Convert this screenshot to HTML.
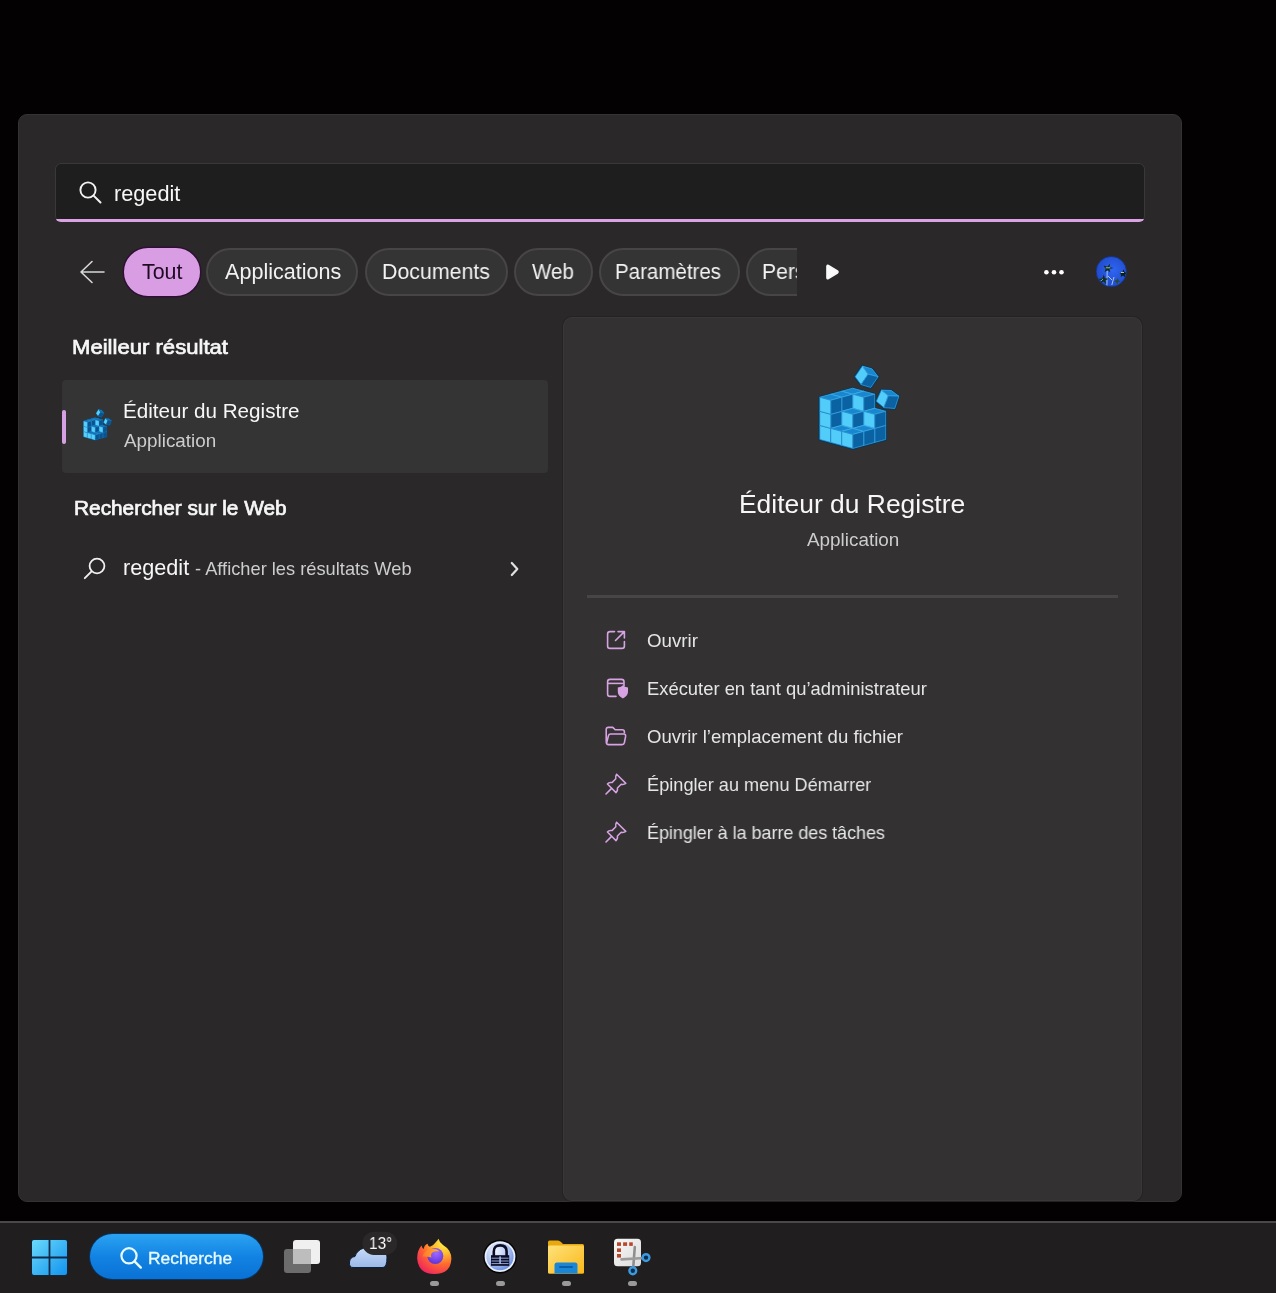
<!DOCTYPE html>
<html><head><meta charset="utf-8">
<style>
*{box-sizing:border-box;margin:0;padding:0}
html,body{width:1276px;height:1293px;overflow:hidden;background:#030102;font-family:"Liberation Sans",sans-serif;color:#fff}
.abs{position:absolute}
#panel{position:absolute;left:18px;top:114px;width:1164px;height:1088px;background:#2a2829;border:1px solid #343233;border-radius:9px}
#search{position:absolute;left:55px;top:163px;width:1090px;height:59px;background:#1f1e1e;box-shadow:inset 0 0 0 1px #3a3939;border-radius:6px;overflow:hidden}
#search .accent{position:absolute;left:0;right:0;bottom:0;height:3.2px;background:#dba3e6}
.txt{position:absolute;white-space:nowrap;line-height:1;will-change:transform}
.chip{position:absolute;top:248px;height:48px;border-radius:24px;background:#353434;border:2px solid #474545}
.chip.on{background:#d99de3;border-color:#d99de3;box-shadow:0 0 0 1.5px #2e1034}
#card{position:absolute;left:62px;top:380px;width:486px;height:93px;background:#353434;border-radius:4px}
#ind{position:absolute;left:62px;top:410px;width:4px;height:34px;background:#d6a1e2;border-radius:2px}
#rp{position:absolute;left:563px;top:317px;width:579px;height:884px;background:#333132;border:1px solid #393738;box-shadow:0 0 0 1px #242223;border-radius:9px}
#sep{position:absolute;left:587px;top:595px;width:531px;height:2.5px;background:#474546}
#taskbar{position:absolute;left:0;top:1221px;width:1276px;height:72px;background:#201e1f;border-top:2px solid #4a4848}
</style></head><body>

<div id="panel"></div>
<div id="search"><div class="accent"></div></div>
<svg class="abs" style="left:78px;top:180px" width="25" height="25" viewBox="0 0 25 25"><circle cx="10" cy="10" r="7.6" fill="none" stroke="#f2f2f2" stroke-width="1.9"/><line x1="15.6" y1="15.6" x2="22.5" y2="22.5" stroke="#f2f2f2" stroke-width="2" stroke-linecap="round"/></svg>

<svg class="abs" style="left:78px;top:259px" width="28" height="26" viewBox="0 0 28 26"><path d="M14 2.5 L3 13 L14 23.5 M3 13 H26" fill="none" stroke="#d8d8d8" stroke-width="1.6" stroke-linecap="round" stroke-linejoin="round"/></svg>

<div class="chip on" style="left:124px;width:76px"></div>
<div class="chip" style="left:206px;width:152px"></div>
<div class="chip" style="left:365px;width:143px"></div>
<div class="chip" style="left:514px;width:79px"></div>
<div class="chip" style="left:599px;width:141px"></div>
<div class="abs" style="left:746px;top:248px;width:51px;height:48px;overflow:hidden">
  <div class="chip" style="left:0;top:0;width:120px"></div>
</div>
<svg class="abs" style="left:824px;top:262px" width="17" height="20" viewBox="0 0 17 20"><path d="M4.3 3.4 Q2.9 2.6 2.9 4.3 V15.7 Q2.9 17.4 4.3 16.6 L13.4 11.1 Q14.8 10 13.4 8.9 Z" fill="#fafafa" stroke="#fafafa" stroke-width="1.4" stroke-linejoin="round"/></svg>
<svg class="abs" style="left:1040px;top:266px" width="28" height="12" viewBox="0 0 28 12"><circle cx="6.4" cy="6.2" r="2.3" fill="#fff"/><circle cx="14" cy="6.2" r="2.3" fill="#fff"/><circle cx="21.5" cy="6.2" r="2.3" fill="#fff"/></svg>
<svg class="abs" style="left:1095px;top:255px" width="33" height="33" viewBox="0 0 33 33">
 <defs><radialGradient id="av" cx="0.55" cy="0.45" r="0.6"><stop offset="0" stop-color="#2f66f2"/><stop offset="1" stop-color="#1f48c6"/></radialGradient><clipPath id="avc"><circle cx="16.3" cy="16.6" r="15"/></clipPath></defs>
 <circle cx="16.3" cy="16.6" r="15.2" fill="url(#av)"/>
 <g clip-path="url(#avc)">
 <path d="M12.2 16 L11.9 31 M19 22 L16.8 30 M13 21 L17 25" stroke="#b9d2f5" stroke-width="0.9" fill="none"/>
 <path d="M8.5 10.5 l4 1.2 l2.6 -3.2 l-0.6 3.6 l4 1 l-4 1 l0.8 3.4 l-2.6 -2.6 l-3.2 2.4 l1.2 -3.2 z" fill="#0e2a1c"/>
 <path d="M10.8 12.8 h4.5" stroke="#cfe6cf" stroke-width="0.8"/>
 <path d="M3 24 l4.2 -0.6 l1.6 -4 l1.2 3.8 l4 0.6 l-3.6 1.4 l0.8 4 l-2.6 -2.6 l-3.4 2 l1.2 -3.2 z" fill="#12301f"/>
 <path d="M6 26 l2 -2" stroke="#9fc29f" stroke-width="0.8"/>
 <path d="M24.5 19 l3 -1.8 l1 -3 l1.2 3 l3 1 l-3 1.2 l0.6 3.2 l-2.2 -2.2 l-2.6 1.6 l0.8 -2.6 z" fill="#0a1f14"/>
 <path d="M26 17.5 h3" stroke="#d6ecd6" stroke-width="0.8"/>
 <path d="M26 27 l3 -1 l2 -2 l0 3 l2 1 l-3 1 l-1 3 l-1 -3 z" fill="#12301f"/>
 <path d="M19 26 l2.5 -1 l1.5 -2 l0.5 2.5 l2 1 l-2.5 0.6 l-0.6 2.4 l-1.2 -2 z" fill="#294a3a"/>
 </g>
 <circle cx="16.3" cy="16.6" r="15.2" fill="none" stroke="#14307a" stroke-width="0.8"/>
</svg>

<div id="card"></div>
<div id="ind"></div>
<svg class="abs" style="left:80px;top:407px" width="34" height="36" viewBox="0 0 1276 1276" preserveAspectRatio="none"><polygon points="422,789 568,829 714,789 568,749" fill="#0a3658" stroke="#0a3658" stroke-width="34" stroke-linejoin="round"/><polygon points="568,1016 714,976 714,789 568,829" fill="#0a3658" stroke="#0a3658" stroke-width="34" stroke-linejoin="round"/><polygon points="422,976 568,1016 568,829 422,789" fill="#0a3658" stroke="#0a3658" stroke-width="34" stroke-linejoin="round"/><polygon points="422,602 568,642 714,602 568,562" fill="#0a3658" stroke="#0a3658" stroke-width="34" stroke-linejoin="round"/><polygon points="568,829 714,789 714,602 568,642" fill="#0a3658" stroke="#0a3658" stroke-width="34" stroke-linejoin="round"/><polygon points="422,789 568,829 568,642 422,602" fill="#0a3658" stroke="#0a3658" stroke-width="34" stroke-linejoin="round"/><polygon points="422,415 568,455 714,415 568,375" fill="#0a3658" stroke="#0a3658" stroke-width="34" stroke-linejoin="round"/><polygon points="568,642 714,602 714,415 568,455" fill="#0a3658" stroke="#0a3658" stroke-width="34" stroke-linejoin="round"/><polygon points="422,602 568,642 568,455 422,415" fill="#0a3658" stroke="#0a3658" stroke-width="34" stroke-linejoin="round"/><polygon points="568,829 714,869 860,829 714,789" fill="#0a3658" stroke="#0a3658" stroke-width="34" stroke-linejoin="round"/><polygon points="714,1056 860,1016 860,829 714,869" fill="#0a3658" stroke="#0a3658" stroke-width="34" stroke-linejoin="round"/><polygon points="568,1016 714,1056 714,869 568,829" fill="#0a3658" stroke="#0a3658" stroke-width="34" stroke-linejoin="round"/><polygon points="568,642 714,682 860,642 714,602" fill="#0a3658" stroke="#0a3658" stroke-width="34" stroke-linejoin="round"/><polygon points="714,869 860,829 860,642 714,682" fill="#0a3658" stroke="#0a3658" stroke-width="34" stroke-linejoin="round"/><polygon points="568,829 714,869 714,682 568,642" fill="#0a3658" stroke="#0a3658" stroke-width="34" stroke-linejoin="round"/><polygon points="568,455 714,495 860,455 714,415" fill="#0a3658" stroke="#0a3658" stroke-width="34" stroke-linejoin="round"/><polygon points="714,682 860,642 860,455 714,495" fill="#0a3658" stroke="#0a3658" stroke-width="34" stroke-linejoin="round"/><polygon points="568,642 714,682 714,495 568,455" fill="#0a3658" stroke="#0a3658" stroke-width="34" stroke-linejoin="round"/><polygon points="714,869 860,909 1006,869 860,829" fill="#0a3658" stroke="#0a3658" stroke-width="34" stroke-linejoin="round"/><polygon points="860,1096 1006,1056 1006,869 860,909" fill="#0a3658" stroke="#0a3658" stroke-width="34" stroke-linejoin="round"/><polygon points="714,1056 860,1096 860,909 714,869" fill="#0a3658" stroke="#0a3658" stroke-width="34" stroke-linejoin="round"/><polygon points="714,682 860,722 1006,682 860,642" fill="#0a3658" stroke="#0a3658" stroke-width="34" stroke-linejoin="round"/><polygon points="860,909 1006,869 1006,682 860,722" fill="#0a3658" stroke="#0a3658" stroke-width="34" stroke-linejoin="round"/><polygon points="714,869 860,909 860,722 714,682" fill="#0a3658" stroke="#0a3658" stroke-width="34" stroke-linejoin="round"/><polygon points="276,829 422,869 568,829 422,789" fill="#0a3658" stroke="#0a3658" stroke-width="34" stroke-linejoin="round"/><polygon points="422,1056 568,1016 568,829 422,869" fill="#0a3658" stroke="#0a3658" stroke-width="34" stroke-linejoin="round"/><polygon points="276,1016 422,1056 422,869 276,829" fill="#0a3658" stroke="#0a3658" stroke-width="34" stroke-linejoin="round"/><polygon points="276,642 422,682 568,642 422,602" fill="#0a3658" stroke="#0a3658" stroke-width="34" stroke-linejoin="round"/><polygon points="422,869 568,829 568,642 422,682" fill="#0a3658" stroke="#0a3658" stroke-width="34" stroke-linejoin="round"/><polygon points="276,829 422,869 422,682 276,642" fill="#0a3658" stroke="#0a3658" stroke-width="34" stroke-linejoin="round"/><polygon points="276,455 422,495 568,455 422,415" fill="#0a3658" stroke="#0a3658" stroke-width="34" stroke-linejoin="round"/><polygon points="422,682 568,642 568,455 422,495" fill="#0a3658" stroke="#0a3658" stroke-width="34" stroke-linejoin="round"/><polygon points="276,642 422,682 422,495 276,455" fill="#0a3658" stroke="#0a3658" stroke-width="34" stroke-linejoin="round"/><polygon points="422,869 568,909 714,869 568,829" fill="#0a3658" stroke="#0a3658" stroke-width="34" stroke-linejoin="round"/><polygon points="568,1096 714,1056 714,869 568,909" fill="#0a3658" stroke="#0a3658" stroke-width="34" stroke-linejoin="round"/><polygon points="422,1056 568,1096 568,909 422,869" fill="#0a3658" stroke="#0a3658" stroke-width="34" stroke-linejoin="round"/><polygon points="422,682 568,722 714,682 568,642" fill="#0a3658" stroke="#0a3658" stroke-width="34" stroke-linejoin="round"/><polygon points="568,909 714,869 714,682 568,722" fill="#0a3658" stroke="#0a3658" stroke-width="34" stroke-linejoin="round"/><polygon points="422,869 568,909 568,722 422,682" fill="#0a3658" stroke="#0a3658" stroke-width="34" stroke-linejoin="round"/><polygon points="568,909 714,949 860,909 714,869" fill="#0a3658" stroke="#0a3658" stroke-width="34" stroke-linejoin="round"/><polygon points="714,1136 860,1096 860,909 714,949" fill="#0a3658" stroke="#0a3658" stroke-width="34" stroke-linejoin="round"/><polygon points="568,1096 714,1136 714,949 568,909" fill="#0a3658" stroke="#0a3658" stroke-width="34" stroke-linejoin="round"/><polygon points="130,869 276,909 422,869 276,829" fill="#0a3658" stroke="#0a3658" stroke-width="34" stroke-linejoin="round"/><polygon points="276,1096 422,1056 422,869 276,909" fill="#0a3658" stroke="#0a3658" stroke-width="34" stroke-linejoin="round"/><polygon points="130,1056 276,1096 276,909 130,869" fill="#0a3658" stroke="#0a3658" stroke-width="34" stroke-linejoin="round"/><polygon points="130,682 276,722 422,682 276,642" fill="#0a3658" stroke="#0a3658" stroke-width="34" stroke-linejoin="round"/><polygon points="276,909 422,869 422,682 276,722" fill="#0a3658" stroke="#0a3658" stroke-width="34" stroke-linejoin="round"/><polygon points="130,869 276,909 276,722 130,682" fill="#0a3658" stroke="#0a3658" stroke-width="34" stroke-linejoin="round"/><polygon points="130,495 276,535 422,495 276,455" fill="#0a3658" stroke="#0a3658" stroke-width="34" stroke-linejoin="round"/><polygon points="276,722 422,682 422,495 276,535" fill="#0a3658" stroke="#0a3658" stroke-width="34" stroke-linejoin="round"/><polygon points="130,682 276,722 276,535 130,495" fill="#0a3658" stroke="#0a3658" stroke-width="34" stroke-linejoin="round"/><polygon points="276,909 422,949 568,909 422,869" fill="#0a3658" stroke="#0a3658" stroke-width="34" stroke-linejoin="round"/><polygon points="422,1136 568,1096 568,909 422,949" fill="#0a3658" stroke="#0a3658" stroke-width="34" stroke-linejoin="round"/><polygon points="276,1096 422,1136 422,949 276,909" fill="#0a3658" stroke="#0a3658" stroke-width="34" stroke-linejoin="round"/><polygon points="422,949 568,989 714,949 568,909" fill="#0a3658" stroke="#0a3658" stroke-width="34" stroke-linejoin="round"/><polygon points="568,1176 714,1136 714,949 568,989" fill="#0a3658" stroke="#0a3658" stroke-width="34" stroke-linejoin="round"/><polygon points="422,1136 568,1176 568,989 422,949" fill="#0a3658" stroke="#0a3658" stroke-width="34" stroke-linejoin="round"/><polygon points="599,222 696,81 772,189 678,327" fill="#0a3658" stroke="#0a3658" stroke-width="34" stroke-linejoin="round"/><polygon points="696,81 824,118 905,222 772,189" fill="#0a3658" stroke="#0a3658" stroke-width="34" stroke-linejoin="round"/><polygon points="772,189 905,222 808,365 678,327" fill="#0a3658" stroke="#0a3658" stroke-width="34" stroke-linejoin="round"/><polygon points="881,549 949,400 1041,476 981,633" fill="#0a3658" stroke="#0a3658" stroke-width="34" stroke-linejoin="round"/><polygon points="949,400 1079,405 1181,481 1041,476" fill="#0a3658" stroke="#0a3658" stroke-width="34" stroke-linejoin="round"/><polygon points="1041,476 1181,481 1127,645 981,633" fill="#0a3658" stroke="#0a3658" stroke-width="34" stroke-linejoin="round"/><polygon points="422,789 568,829 714,789 568,749" fill="#0f72b5" stroke="#2f8fd0" stroke-width="9" stroke-linejoin="round"/><polygon points="568,1016 714,976 714,789 568,829" fill="#0a5290" stroke="#2f8fd0" stroke-width="9" stroke-linejoin="round"/><polygon points="422,976 568,1016 568,829 422,789" fill="#55cffb" stroke="#1a6aa8" stroke-width="9" stroke-linejoin="round"/><polygon points="422,602 568,642 714,602 568,562" fill="#0f72b5" stroke="#2f8fd0" stroke-width="9" stroke-linejoin="round"/><polygon points="568,829 714,789 714,602 568,642" fill="#0a5290" stroke="#2f8fd0" stroke-width="9" stroke-linejoin="round"/><polygon points="422,789 568,829 568,642 422,602" fill="#55cffb" stroke="#1a6aa8" stroke-width="9" stroke-linejoin="round"/><polygon points="422,415 568,455 714,415 568,375" fill="#0f72b5" stroke="#2f8fd0" stroke-width="9" stroke-linejoin="round"/><polygon points="568,642 714,602 714,415 568,455" fill="#0a5290" stroke="#2f8fd0" stroke-width="9" stroke-linejoin="round"/><polygon points="422,602 568,642 568,455 422,415" fill="#55cffb" stroke="#1a6aa8" stroke-width="9" stroke-linejoin="round"/><polygon points="568,829 714,869 860,829 714,789" fill="#0f72b5" stroke="#2f8fd0" stroke-width="9" stroke-linejoin="round"/><polygon points="714,1056 860,1016 860,829 714,869" fill="#0a5290" stroke="#2f8fd0" stroke-width="9" stroke-linejoin="round"/><polygon points="568,1016 714,1056 714,869 568,829" fill="#55cffb" stroke="#1a6aa8" stroke-width="9" stroke-linejoin="round"/><polygon points="568,642 714,682 860,642 714,602" fill="#0f72b5" stroke="#2f8fd0" stroke-width="9" stroke-linejoin="round"/><polygon points="714,869 860,829 860,642 714,682" fill="#0a5290" stroke="#2f8fd0" stroke-width="9" stroke-linejoin="round"/><polygon points="568,829 714,869 714,682 568,642" fill="#55cffb" stroke="#1a6aa8" stroke-width="9" stroke-linejoin="round"/><polygon points="568,455 714,495 860,455 714,415" fill="#0f72b5" stroke="#2f8fd0" stroke-width="9" stroke-linejoin="round"/><polygon points="714,682 860,642 860,455 714,495" fill="#0a5290" stroke="#2f8fd0" stroke-width="9" stroke-linejoin="round"/><polygon points="568,642 714,682 714,495 568,455" fill="#55cffb" stroke="#1a6aa8" stroke-width="9" stroke-linejoin="round"/><polygon points="714,869 860,909 1006,869 860,829" fill="#0f72b5" stroke="#2f8fd0" stroke-width="9" stroke-linejoin="round"/><polygon points="860,1096 1006,1056 1006,869 860,909" fill="#0a5290" stroke="#2f8fd0" stroke-width="9" stroke-linejoin="round"/><polygon points="714,1056 860,1096 860,909 714,869" fill="#55cffb" stroke="#1a6aa8" stroke-width="9" stroke-linejoin="round"/><polygon points="714,682 860,722 1006,682 860,642" fill="#0f72b5" stroke="#2f8fd0" stroke-width="9" stroke-linejoin="round"/><polygon points="860,909 1006,869 1006,682 860,722" fill="#0a5290" stroke="#2f8fd0" stroke-width="9" stroke-linejoin="round"/><polygon points="714,869 860,909 860,722 714,682" fill="#55cffb" stroke="#1a6aa8" stroke-width="9" stroke-linejoin="round"/><polygon points="276,829 422,869 568,829 422,789" fill="#0f72b5" stroke="#2f8fd0" stroke-width="9" stroke-linejoin="round"/><polygon points="422,1056 568,1016 568,829 422,869" fill="#0a5290" stroke="#2f8fd0" stroke-width="9" stroke-linejoin="round"/><polygon points="276,1016 422,1056 422,869 276,829" fill="#55cffb" stroke="#1a6aa8" stroke-width="9" stroke-linejoin="round"/><polygon points="276,642 422,682 568,642 422,602" fill="#0f72b5" stroke="#2f8fd0" stroke-width="9" stroke-linejoin="round"/><polygon points="422,869 568,829 568,642 422,682" fill="#0a5290" stroke="#2f8fd0" stroke-width="9" stroke-linejoin="round"/><polygon points="276,829 422,869 422,682 276,642" fill="#55cffb" stroke="#1a6aa8" stroke-width="9" stroke-linejoin="round"/><polygon points="276,455 422,495 568,455 422,415" fill="#0f72b5" stroke="#2f8fd0" stroke-width="9" stroke-linejoin="round"/><polygon points="422,682 568,642 568,455 422,495" fill="#0a5290" stroke="#2f8fd0" stroke-width="9" stroke-linejoin="round"/><polygon points="276,642 422,682 422,495 276,455" fill="#55cffb" stroke="#1a6aa8" stroke-width="9" stroke-linejoin="round"/><polygon points="422,869 568,909 714,869 568,829" fill="#0f72b5" stroke="#2f8fd0" stroke-width="9" stroke-linejoin="round"/><polygon points="568,1096 714,1056 714,869 568,909" fill="#0a5290" stroke="#2f8fd0" stroke-width="9" stroke-linejoin="round"/><polygon points="422,1056 568,1096 568,909 422,869" fill="#55cffb" stroke="#1a6aa8" stroke-width="9" stroke-linejoin="round"/><polygon points="422,682 568,722 714,682 568,642" fill="#0f72b5" stroke="#2f8fd0" stroke-width="9" stroke-linejoin="round"/><polygon points="568,909 714,869 714,682 568,722" fill="#0a5290" stroke="#2f8fd0" stroke-width="9" stroke-linejoin="round"/><polygon points="422,869 568,909 568,722 422,682" fill="#55cffb" stroke="#1a6aa8" stroke-width="9" stroke-linejoin="round"/><polygon points="568,909 714,949 860,909 714,869" fill="#0f72b5" stroke="#2f8fd0" stroke-width="9" stroke-linejoin="round"/><polygon points="714,1136 860,1096 860,909 714,949" fill="#0a5290" stroke="#2f8fd0" stroke-width="9" stroke-linejoin="round"/><polygon points="568,1096 714,1136 714,949 568,909" fill="#55cffb" stroke="#1a6aa8" stroke-width="9" stroke-linejoin="round"/><polygon points="130,869 276,909 422,869 276,829" fill="#0f72b5" stroke="#2f8fd0" stroke-width="9" stroke-linejoin="round"/><polygon points="276,1096 422,1056 422,869 276,909" fill="#0a5290" stroke="#2f8fd0" stroke-width="9" stroke-linejoin="round"/><polygon points="130,1056 276,1096 276,909 130,869" fill="#55cffb" stroke="#1a6aa8" stroke-width="9" stroke-linejoin="round"/><polygon points="130,682 276,722 422,682 276,642" fill="#0f72b5" stroke="#2f8fd0" stroke-width="9" stroke-linejoin="round"/><polygon points="276,909 422,869 422,682 276,722" fill="#0a5290" stroke="#2f8fd0" stroke-width="9" stroke-linejoin="round"/><polygon points="130,869 276,909 276,722 130,682" fill="#55cffb" stroke="#1a6aa8" stroke-width="9" stroke-linejoin="round"/><polygon points="130,495 276,535 422,495 276,455" fill="#0f72b5" stroke="#2f8fd0" stroke-width="9" stroke-linejoin="round"/><polygon points="276,722 422,682 422,495 276,535" fill="#0a5290" stroke="#2f8fd0" stroke-width="9" stroke-linejoin="round"/><polygon points="130,682 276,722 276,535 130,495" fill="#55cffb" stroke="#1a6aa8" stroke-width="9" stroke-linejoin="round"/><polygon points="276,909 422,949 568,909 422,869" fill="#0f72b5" stroke="#2f8fd0" stroke-width="9" stroke-linejoin="round"/><polygon points="422,1136 568,1096 568,909 422,949" fill="#0a5290" stroke="#2f8fd0" stroke-width="9" stroke-linejoin="round"/><polygon points="276,1096 422,1136 422,949 276,909" fill="#55cffb" stroke="#1a6aa8" stroke-width="9" stroke-linejoin="round"/><polygon points="422,949 568,989 714,949 568,909" fill="#0f72b5" stroke="#2f8fd0" stroke-width="9" stroke-linejoin="round"/><polygon points="568,1176 714,1136 714,949 568,989" fill="#0a5290" stroke="#2f8fd0" stroke-width="9" stroke-linejoin="round"/><polygon points="422,1136 568,1176 568,989 422,949" fill="#55cffb" stroke="#1a6aa8" stroke-width="9" stroke-linejoin="round"/><polygon points="599,222 696,81 772,189 678,327" fill="#55cffb" stroke="#1a6aa8" stroke-width="9" stroke-linejoin="round"/><polygon points="696,81 824,118 905,222 772,189" fill="#0f72b5" stroke="#2f8fd0" stroke-width="9" stroke-linejoin="round"/><polygon points="772,189 905,222 808,365 678,327" fill="#0a5290" stroke="#2f8fd0" stroke-width="9" stroke-linejoin="round"/><polygon points="881,549 949,400 1041,476 981,633" fill="#55cffb" stroke="#1a6aa8" stroke-width="9" stroke-linejoin="round"/><polygon points="949,400 1079,405 1181,481 1041,476" fill="#0f72b5" stroke="#2f8fd0" stroke-width="9" stroke-linejoin="round"/><polygon points="1041,476 1181,481 1127,645 981,633" fill="#0a5290" stroke="#2f8fd0" stroke-width="9" stroke-linejoin="round"/></svg>

<svg class="abs" style="left:82px;top:556px" width="26" height="26" viewBox="0 0 26 26"><circle cx="15" cy="10" r="7.4" fill="none" stroke="#f0f0f0" stroke-width="1.8"/><line x1="9.6" y1="15.4" x2="2.8" y2="22.2" stroke="#f0f0f0" stroke-width="1.9" stroke-linecap="round"/></svg>
<svg class="abs" style="left:506.5px;top:560px" width="14" height="18" viewBox="0 0 14 18"><path d="M4.8 3 L10.3 9 L4.8 15" fill="none" stroke="#e2e2e2" stroke-width="2.2" stroke-linecap="round" stroke-linejoin="round"/></svg>

<div id="rp"></div>
<svg class="abs" style="left:810px;top:360px" width="96" height="96" viewBox="0 0 1276 1276"><polygon points="422,789 568,829 714,789 568,749" fill="#0a3658" stroke="#0a3658" stroke-width="34" stroke-linejoin="round"/><polygon points="568,1016 714,976 714,789 568,829" fill="#0a3658" stroke="#0a3658" stroke-width="34" stroke-linejoin="round"/><polygon points="422,976 568,1016 568,829 422,789" fill="#0a3658" stroke="#0a3658" stroke-width="34" stroke-linejoin="round"/><polygon points="422,602 568,642 714,602 568,562" fill="#0a3658" stroke="#0a3658" stroke-width="34" stroke-linejoin="round"/><polygon points="568,829 714,789 714,602 568,642" fill="#0a3658" stroke="#0a3658" stroke-width="34" stroke-linejoin="round"/><polygon points="422,789 568,829 568,642 422,602" fill="#0a3658" stroke="#0a3658" stroke-width="34" stroke-linejoin="round"/><polygon points="422,415 568,455 714,415 568,375" fill="#0a3658" stroke="#0a3658" stroke-width="34" stroke-linejoin="round"/><polygon points="568,642 714,602 714,415 568,455" fill="#0a3658" stroke="#0a3658" stroke-width="34" stroke-linejoin="round"/><polygon points="422,602 568,642 568,455 422,415" fill="#0a3658" stroke="#0a3658" stroke-width="34" stroke-linejoin="round"/><polygon points="568,829 714,869 860,829 714,789" fill="#0a3658" stroke="#0a3658" stroke-width="34" stroke-linejoin="round"/><polygon points="714,1056 860,1016 860,829 714,869" fill="#0a3658" stroke="#0a3658" stroke-width="34" stroke-linejoin="round"/><polygon points="568,1016 714,1056 714,869 568,829" fill="#0a3658" stroke="#0a3658" stroke-width="34" stroke-linejoin="round"/><polygon points="568,642 714,682 860,642 714,602" fill="#0a3658" stroke="#0a3658" stroke-width="34" stroke-linejoin="round"/><polygon points="714,869 860,829 860,642 714,682" fill="#0a3658" stroke="#0a3658" stroke-width="34" stroke-linejoin="round"/><polygon points="568,829 714,869 714,682 568,642" fill="#0a3658" stroke="#0a3658" stroke-width="34" stroke-linejoin="round"/><polygon points="568,455 714,495 860,455 714,415" fill="#0a3658" stroke="#0a3658" stroke-width="34" stroke-linejoin="round"/><polygon points="714,682 860,642 860,455 714,495" fill="#0a3658" stroke="#0a3658" stroke-width="34" stroke-linejoin="round"/><polygon points="568,642 714,682 714,495 568,455" fill="#0a3658" stroke="#0a3658" stroke-width="34" stroke-linejoin="round"/><polygon points="714,869 860,909 1006,869 860,829" fill="#0a3658" stroke="#0a3658" stroke-width="34" stroke-linejoin="round"/><polygon points="860,1096 1006,1056 1006,869 860,909" fill="#0a3658" stroke="#0a3658" stroke-width="34" stroke-linejoin="round"/><polygon points="714,1056 860,1096 860,909 714,869" fill="#0a3658" stroke="#0a3658" stroke-width="34" stroke-linejoin="round"/><polygon points="714,682 860,722 1006,682 860,642" fill="#0a3658" stroke="#0a3658" stroke-width="34" stroke-linejoin="round"/><polygon points="860,909 1006,869 1006,682 860,722" fill="#0a3658" stroke="#0a3658" stroke-width="34" stroke-linejoin="round"/><polygon points="714,869 860,909 860,722 714,682" fill="#0a3658" stroke="#0a3658" stroke-width="34" stroke-linejoin="round"/><polygon points="276,829 422,869 568,829 422,789" fill="#0a3658" stroke="#0a3658" stroke-width="34" stroke-linejoin="round"/><polygon points="422,1056 568,1016 568,829 422,869" fill="#0a3658" stroke="#0a3658" stroke-width="34" stroke-linejoin="round"/><polygon points="276,1016 422,1056 422,869 276,829" fill="#0a3658" stroke="#0a3658" stroke-width="34" stroke-linejoin="round"/><polygon points="276,642 422,682 568,642 422,602" fill="#0a3658" stroke="#0a3658" stroke-width="34" stroke-linejoin="round"/><polygon points="422,869 568,829 568,642 422,682" fill="#0a3658" stroke="#0a3658" stroke-width="34" stroke-linejoin="round"/><polygon points="276,829 422,869 422,682 276,642" fill="#0a3658" stroke="#0a3658" stroke-width="34" stroke-linejoin="round"/><polygon points="276,455 422,495 568,455 422,415" fill="#0a3658" stroke="#0a3658" stroke-width="34" stroke-linejoin="round"/><polygon points="422,682 568,642 568,455 422,495" fill="#0a3658" stroke="#0a3658" stroke-width="34" stroke-linejoin="round"/><polygon points="276,642 422,682 422,495 276,455" fill="#0a3658" stroke="#0a3658" stroke-width="34" stroke-linejoin="round"/><polygon points="422,869 568,909 714,869 568,829" fill="#0a3658" stroke="#0a3658" stroke-width="34" stroke-linejoin="round"/><polygon points="568,1096 714,1056 714,869 568,909" fill="#0a3658" stroke="#0a3658" stroke-width="34" stroke-linejoin="round"/><polygon points="422,1056 568,1096 568,909 422,869" fill="#0a3658" stroke="#0a3658" stroke-width="34" stroke-linejoin="round"/><polygon points="422,682 568,722 714,682 568,642" fill="#0a3658" stroke="#0a3658" stroke-width="34" stroke-linejoin="round"/><polygon points="568,909 714,869 714,682 568,722" fill="#0a3658" stroke="#0a3658" stroke-width="34" stroke-linejoin="round"/><polygon points="422,869 568,909 568,722 422,682" fill="#0a3658" stroke="#0a3658" stroke-width="34" stroke-linejoin="round"/><polygon points="568,909 714,949 860,909 714,869" fill="#0a3658" stroke="#0a3658" stroke-width="34" stroke-linejoin="round"/><polygon points="714,1136 860,1096 860,909 714,949" fill="#0a3658" stroke="#0a3658" stroke-width="34" stroke-linejoin="round"/><polygon points="568,1096 714,1136 714,949 568,909" fill="#0a3658" stroke="#0a3658" stroke-width="34" stroke-linejoin="round"/><polygon points="130,869 276,909 422,869 276,829" fill="#0a3658" stroke="#0a3658" stroke-width="34" stroke-linejoin="round"/><polygon points="276,1096 422,1056 422,869 276,909" fill="#0a3658" stroke="#0a3658" stroke-width="34" stroke-linejoin="round"/><polygon points="130,1056 276,1096 276,909 130,869" fill="#0a3658" stroke="#0a3658" stroke-width="34" stroke-linejoin="round"/><polygon points="130,682 276,722 422,682 276,642" fill="#0a3658" stroke="#0a3658" stroke-width="34" stroke-linejoin="round"/><polygon points="276,909 422,869 422,682 276,722" fill="#0a3658" stroke="#0a3658" stroke-width="34" stroke-linejoin="round"/><polygon points="130,869 276,909 276,722 130,682" fill="#0a3658" stroke="#0a3658" stroke-width="34" stroke-linejoin="round"/><polygon points="130,495 276,535 422,495 276,455" fill="#0a3658" stroke="#0a3658" stroke-width="34" stroke-linejoin="round"/><polygon points="276,722 422,682 422,495 276,535" fill="#0a3658" stroke="#0a3658" stroke-width="34" stroke-linejoin="round"/><polygon points="130,682 276,722 276,535 130,495" fill="#0a3658" stroke="#0a3658" stroke-width="34" stroke-linejoin="round"/><polygon points="276,909 422,949 568,909 422,869" fill="#0a3658" stroke="#0a3658" stroke-width="34" stroke-linejoin="round"/><polygon points="422,1136 568,1096 568,909 422,949" fill="#0a3658" stroke="#0a3658" stroke-width="34" stroke-linejoin="round"/><polygon points="276,1096 422,1136 422,949 276,909" fill="#0a3658" stroke="#0a3658" stroke-width="34" stroke-linejoin="round"/><polygon points="422,949 568,989 714,949 568,909" fill="#0a3658" stroke="#0a3658" stroke-width="34" stroke-linejoin="round"/><polygon points="568,1176 714,1136 714,949 568,989" fill="#0a3658" stroke="#0a3658" stroke-width="34" stroke-linejoin="round"/><polygon points="422,1136 568,1176 568,989 422,949" fill="#0a3658" stroke="#0a3658" stroke-width="34" stroke-linejoin="round"/><polygon points="599,222 696,81 772,189 678,327" fill="#0a3658" stroke="#0a3658" stroke-width="34" stroke-linejoin="round"/><polygon points="696,81 824,118 905,222 772,189" fill="#0a3658" stroke="#0a3658" stroke-width="34" stroke-linejoin="round"/><polygon points="772,189 905,222 808,365 678,327" fill="#0a3658" stroke="#0a3658" stroke-width="34" stroke-linejoin="round"/><polygon points="881,549 949,400 1041,476 981,633" fill="#0a3658" stroke="#0a3658" stroke-width="34" stroke-linejoin="round"/><polygon points="949,400 1079,405 1181,481 1041,476" fill="#0a3658" stroke="#0a3658" stroke-width="34" stroke-linejoin="round"/><polygon points="1041,476 1181,481 1127,645 981,633" fill="#0a3658" stroke="#0a3658" stroke-width="34" stroke-linejoin="round"/><polygon points="422,789 568,829 714,789 568,749" fill="#1787cf" stroke="#46b6ee" stroke-width="9" stroke-linejoin="round"/><polygon points="568,1016 714,976 714,789 568,829" fill="#0b62a3" stroke="#3aa8e6" stroke-width="9" stroke-linejoin="round"/><polygon points="422,976 568,1016 568,829 422,789" fill="#52cdfa" stroke="#1f7fbf" stroke-width="9" stroke-linejoin="round"/><polygon points="422,602 568,642 714,602 568,562" fill="#1787cf" stroke="#46b6ee" stroke-width="9" stroke-linejoin="round"/><polygon points="568,829 714,789 714,602 568,642" fill="#0b62a3" stroke="#3aa8e6" stroke-width="9" stroke-linejoin="round"/><polygon points="422,789 568,829 568,642 422,602" fill="#52cdfa" stroke="#1f7fbf" stroke-width="9" stroke-linejoin="round"/><polygon points="422,415 568,455 714,415 568,375" fill="#1787cf" stroke="#46b6ee" stroke-width="9" stroke-linejoin="round"/><polygon points="568,642 714,602 714,415 568,455" fill="#0b62a3" stroke="#3aa8e6" stroke-width="9" stroke-linejoin="round"/><polygon points="422,602 568,642 568,455 422,415" fill="#52cdfa" stroke="#1f7fbf" stroke-width="9" stroke-linejoin="round"/><polygon points="568,829 714,869 860,829 714,789" fill="#1787cf" stroke="#46b6ee" stroke-width="9" stroke-linejoin="round"/><polygon points="714,1056 860,1016 860,829 714,869" fill="#0b62a3" stroke="#3aa8e6" stroke-width="9" stroke-linejoin="round"/><polygon points="568,1016 714,1056 714,869 568,829" fill="#52cdfa" stroke="#1f7fbf" stroke-width="9" stroke-linejoin="round"/><polygon points="568,642 714,682 860,642 714,602" fill="#1787cf" stroke="#46b6ee" stroke-width="9" stroke-linejoin="round"/><polygon points="714,869 860,829 860,642 714,682" fill="#0b62a3" stroke="#3aa8e6" stroke-width="9" stroke-linejoin="round"/><polygon points="568,829 714,869 714,682 568,642" fill="#52cdfa" stroke="#1f7fbf" stroke-width="9" stroke-linejoin="round"/><polygon points="568,455 714,495 860,455 714,415" fill="#1787cf" stroke="#46b6ee" stroke-width="9" stroke-linejoin="round"/><polygon points="714,682 860,642 860,455 714,495" fill="#0b62a3" stroke="#3aa8e6" stroke-width="9" stroke-linejoin="round"/><polygon points="568,642 714,682 714,495 568,455" fill="#52cdfa" stroke="#1f7fbf" stroke-width="9" stroke-linejoin="round"/><polygon points="714,869 860,909 1006,869 860,829" fill="#1787cf" stroke="#46b6ee" stroke-width="9" stroke-linejoin="round"/><polygon points="860,1096 1006,1056 1006,869 860,909" fill="#0b62a3" stroke="#3aa8e6" stroke-width="9" stroke-linejoin="round"/><polygon points="714,1056 860,1096 860,909 714,869" fill="#52cdfa" stroke="#1f7fbf" stroke-width="9" stroke-linejoin="round"/><polygon points="714,682 860,722 1006,682 860,642" fill="#1787cf" stroke="#46b6ee" stroke-width="9" stroke-linejoin="round"/><polygon points="860,909 1006,869 1006,682 860,722" fill="#0b62a3" stroke="#3aa8e6" stroke-width="9" stroke-linejoin="round"/><polygon points="714,869 860,909 860,722 714,682" fill="#52cdfa" stroke="#1f7fbf" stroke-width="9" stroke-linejoin="round"/><polygon points="276,829 422,869 568,829 422,789" fill="#1787cf" stroke="#46b6ee" stroke-width="9" stroke-linejoin="round"/><polygon points="422,1056 568,1016 568,829 422,869" fill="#0b62a3" stroke="#3aa8e6" stroke-width="9" stroke-linejoin="round"/><polygon points="276,1016 422,1056 422,869 276,829" fill="#52cdfa" stroke="#1f7fbf" stroke-width="9" stroke-linejoin="round"/><polygon points="276,642 422,682 568,642 422,602" fill="#1787cf" stroke="#46b6ee" stroke-width="9" stroke-linejoin="round"/><polygon points="422,869 568,829 568,642 422,682" fill="#0b62a3" stroke="#3aa8e6" stroke-width="9" stroke-linejoin="round"/><polygon points="276,829 422,869 422,682 276,642" fill="#52cdfa" stroke="#1f7fbf" stroke-width="9" stroke-linejoin="round"/><polygon points="276,455 422,495 568,455 422,415" fill="#1787cf" stroke="#46b6ee" stroke-width="9" stroke-linejoin="round"/><polygon points="422,682 568,642 568,455 422,495" fill="#0b62a3" stroke="#3aa8e6" stroke-width="9" stroke-linejoin="round"/><polygon points="276,642 422,682 422,495 276,455" fill="#52cdfa" stroke="#1f7fbf" stroke-width="9" stroke-linejoin="round"/><polygon points="422,869 568,909 714,869 568,829" fill="#1787cf" stroke="#46b6ee" stroke-width="9" stroke-linejoin="round"/><polygon points="568,1096 714,1056 714,869 568,909" fill="#0b62a3" stroke="#3aa8e6" stroke-width="9" stroke-linejoin="round"/><polygon points="422,1056 568,1096 568,909 422,869" fill="#52cdfa" stroke="#1f7fbf" stroke-width="9" stroke-linejoin="round"/><polygon points="422,682 568,722 714,682 568,642" fill="#1787cf" stroke="#46b6ee" stroke-width="9" stroke-linejoin="round"/><polygon points="568,909 714,869 714,682 568,722" fill="#0b62a3" stroke="#3aa8e6" stroke-width="9" stroke-linejoin="round"/><polygon points="422,869 568,909 568,722 422,682" fill="#52cdfa" stroke="#1f7fbf" stroke-width="9" stroke-linejoin="round"/><polygon points="568,909 714,949 860,909 714,869" fill="#1787cf" stroke="#46b6ee" stroke-width="9" stroke-linejoin="round"/><polygon points="714,1136 860,1096 860,909 714,949" fill="#0b62a3" stroke="#3aa8e6" stroke-width="9" stroke-linejoin="round"/><polygon points="568,1096 714,1136 714,949 568,909" fill="#52cdfa" stroke="#1f7fbf" stroke-width="9" stroke-linejoin="round"/><polygon points="130,869 276,909 422,869 276,829" fill="#1787cf" stroke="#46b6ee" stroke-width="9" stroke-linejoin="round"/><polygon points="276,1096 422,1056 422,869 276,909" fill="#0b62a3" stroke="#3aa8e6" stroke-width="9" stroke-linejoin="round"/><polygon points="130,1056 276,1096 276,909 130,869" fill="#52cdfa" stroke="#1f7fbf" stroke-width="9" stroke-linejoin="round"/><polygon points="130,682 276,722 422,682 276,642" fill="#1787cf" stroke="#46b6ee" stroke-width="9" stroke-linejoin="round"/><polygon points="276,909 422,869 422,682 276,722" fill="#0b62a3" stroke="#3aa8e6" stroke-width="9" stroke-linejoin="round"/><polygon points="130,869 276,909 276,722 130,682" fill="#52cdfa" stroke="#1f7fbf" stroke-width="9" stroke-linejoin="round"/><polygon points="130,495 276,535 422,495 276,455" fill="#1787cf" stroke="#46b6ee" stroke-width="9" stroke-linejoin="round"/><polygon points="276,722 422,682 422,495 276,535" fill="#0b62a3" stroke="#3aa8e6" stroke-width="9" stroke-linejoin="round"/><polygon points="130,682 276,722 276,535 130,495" fill="#52cdfa" stroke="#1f7fbf" stroke-width="9" stroke-linejoin="round"/><polygon points="276,909 422,949 568,909 422,869" fill="#1787cf" stroke="#46b6ee" stroke-width="9" stroke-linejoin="round"/><polygon points="422,1136 568,1096 568,909 422,949" fill="#0b62a3" stroke="#3aa8e6" stroke-width="9" stroke-linejoin="round"/><polygon points="276,1096 422,1136 422,949 276,909" fill="#52cdfa" stroke="#1f7fbf" stroke-width="9" stroke-linejoin="round"/><polygon points="422,949 568,989 714,949 568,909" fill="#1787cf" stroke="#46b6ee" stroke-width="9" stroke-linejoin="round"/><polygon points="568,1176 714,1136 714,949 568,989" fill="#0b62a3" stroke="#3aa8e6" stroke-width="9" stroke-linejoin="round"/><polygon points="422,1136 568,1176 568,989 422,949" fill="#52cdfa" stroke="#1f7fbf" stroke-width="9" stroke-linejoin="round"/><polygon points="599,222 696,81 772,189 678,327" fill="#52cdfa" stroke="#1f7fbf" stroke-width="9" stroke-linejoin="round"/><polygon points="696,81 824,118 905,222 772,189" fill="#1787cf" stroke="#46b6ee" stroke-width="9" stroke-linejoin="round"/><polygon points="772,189 905,222 808,365 678,327" fill="#0b62a3" stroke="#3aa8e6" stroke-width="9" stroke-linejoin="round"/><polygon points="881,549 949,400 1041,476 981,633" fill="#52cdfa" stroke="#1f7fbf" stroke-width="9" stroke-linejoin="round"/><polygon points="949,400 1079,405 1181,481 1041,476" fill="#1787cf" stroke="#46b6ee" stroke-width="9" stroke-linejoin="round"/><polygon points="1041,476 1181,481 1127,645 981,633" fill="#0b62a3" stroke="#3aa8e6" stroke-width="9" stroke-linejoin="round"/></svg>
<div id="sep"></div>


<svg class="abs" style="left:604px;top:628px" width="24" height="24" viewBox="0 0 24 24"><path d="M10.5 3.6 H6 Q3.6 3.6 3.6 6 V18 Q3.6 20.4 6 20.4 H18 Q20.4 20.4 20.4 18 V13.5" fill="none" stroke="#d8a3e3" stroke-width="1.6" stroke-linecap="round"/><path d="M14 3.6 H20.4 V10 M20.4 3.6 L11.5 12.5" fill="none" stroke="#d8a3e3" stroke-width="1.6" stroke-linecap="round" stroke-linejoin="round"/></svg>
<svg class="abs" style="left:604px;top:676px" width="26" height="24" viewBox="0 0 26 24"><path d="M12 20.4 H6 Q3.6 20.4 3.6 18 V5.8 Q3.6 3.4 6 3.4 H17.5 Q20 3.4 20 5.8 V10" fill="none" stroke="#d8a3e3" stroke-width="1.6" stroke-linecap="round"/><path d="M3.8 7.4 H19.8" stroke="#d8a3e3" stroke-width="1.6"/><path d="M13.8 11.6 Q17.6 10.8 18.9 9.2 Q20.2 10.8 24 11.6 V15.8 Q24 20 18.9 22.4 Q13.8 20 13.8 15.8 Z" fill="#d8a3e3"/></svg>
<svg class="abs" style="left:603px;top:724px" width="26" height="24" viewBox="0 0 26 24"><path d="M3.2 17.8 V5.6 Q3.2 3.4 5.4 3.4 H9.8 L12.2 5.8 H19.2 Q21.4 5.8 21.4 8 V9.4" fill="none" stroke="#d8a3e3" stroke-width="1.6" stroke-linejoin="round"/><path d="M3.2 17.8 Q3.2 20.6 5.6 20.6 H19 Q21 20.6 21.4 18.6 L22.6 12.4 Q22.8 10 20.6 10 H7.6 Q5.8 10 5.4 11.8 L3.6 19.4" fill="none" stroke="#d8a3e3" stroke-width="1.6" stroke-linejoin="round"/></svg>
<svg class="abs" style="left:603px;top:771px" width="26" height="26" viewBox="0 0 26 26"><path d="M13.6 3.2 L22.8 12.4 Q20.8 13.8 18.2 13.2 L14.4 17 Q15 20 13 21.6 L4.4 13 Q6 11 9 11.6 L12.8 7.8 Q12.2 5.2 13.6 3.2 Z" fill="none" stroke="#d8a3e3" stroke-width="1.5" stroke-linejoin="round"/><path d="M8.6 17.4 L3 23" stroke="#d8a3e3" stroke-width="1.6" stroke-linecap="round"/></svg>
<svg class="abs" style="left:603px;top:819px" width="26" height="26" viewBox="0 0 26 26"><path d="M13.6 3.2 L22.8 12.4 Q20.8 13.8 18.2 13.2 L14.4 17 Q15 20 13 21.6 L4.4 13 Q6 11 9 11.6 L12.8 7.8 Q12.2 5.2 13.6 3.2 Z" fill="none" stroke="#d8a3e3" stroke-width="1.5" stroke-linejoin="round"/><path d="M8.6 17.4 L3 23" stroke="#d8a3e3" stroke-width="1.6" stroke-linecap="round"/></svg>


<div id="taskbar"></div>

<svg class="abs" style="left:31px;top:1239px" width="37" height="37" viewBox="0 0 37 37">
<defs><linearGradient id="wg" x1="0" y1="0" x2="1" y2="1"><stop offset="0" stop-color="#6ad9fb"/><stop offset="1" stop-color="#1394ee"/></linearGradient></defs>
<rect x="0.5" y="0.5" width="36" height="36" rx="2.5" fill="#0a2a4a"/>
<path d="M1 3 Q1 1 3 1 H17.6 V17.6 H1 Z M19.4 1 H34 Q36 1 36 3 V17.6 H19.4 Z M1 19.4 H17.6 V36 H3 Q1 36 1 34 Z M19.4 19.4 H36 V34 Q36 36 34 36 H19.4 Z" fill="url(#wg)"/>
</svg>
<div class="abs" style="left:89px;top:1233px;width:175px;height:47px;border-radius:24px;background:#0a3560"></div>
<div class="abs" style="left:90px;top:1234px;width:173px;height:45px;border-radius:23px;background:linear-gradient(180deg,#2ba3f2 0%,#1283e3 50%,#0a72d4 100%)"></div>
<svg class="abs" style="left:118px;top:1245px" width="26" height="26" viewBox="0 0 26 26"><circle cx="11" cy="10.8" r="7.6" fill="none" stroke="#e8fbff" stroke-width="2.2"/><line x1="16.6" y1="16.4" x2="22.8" y2="22.6" stroke="#e8fbff" stroke-width="2.4" stroke-linecap="round"/></svg>

<div class="abs" style="left:284px;top:1249px;width:27px;height:24px;border-radius:3px;background:#6c6c6c"></div>
<div class="abs" style="left:293px;top:1240px;width:27px;height:24px;border-radius:3px;background:#f0f0f0"></div>
<div class="abs" style="left:293px;top:1249px;width:18px;height:15px;background:#bdbdbd"></div>

<svg class="abs" style="left:345px;top:1230px" width="56" height="42" viewBox="0 0 56 42">
<defs><linearGradient id="cg" x1="0" y1="0" x2="0" y2="1"><stop offset="0" stop-color="#c9dcf8"/><stop offset="1" stop-color="#9ab8e8"/></linearGradient></defs>
<path d="M8 37.5 Q4 37.5 4.5 32 Q5 27 10 26.5 Q12 20 19 18 Q27 16 31 22 Q33 20.5 36 20.5 Q42 21 42 27 Q42 37.5 38 37.5 Z" fill="url(#cg)" stroke="#0d1f3a" stroke-width="1"/>
<rect x="17.4" y="1.7" width="34.7" height="23.3" rx="11.6" fill="#2a2829"/>
</svg>

<svg class="abs" style="left:414px;top:1236px" width="40" height="40" viewBox="0 0 40 40">
<defs><radialGradient id="ff" cx="0.78" cy="0.12" r="1.0"><stop offset="0" stop-color="#fff14a"/><stop offset="0.3" stop-color="#ffbd2e"/><stop offset="0.6" stop-color="#ff6a2f"/><stop offset="1" stop-color="#f0245e"/></radialGradient>
<radialGradient id="fp" cx="0.55" cy="0.3" r="0.75"><stop offset="0" stop-color="#a06bff"/><stop offset="1" stop-color="#5b2fd8"/></radialGradient>
<linearGradient id="ft" x1="0" y1="0" x2="1" y2="0"><stop offset="0" stop-color="#ff7a2a"/><stop offset="1" stop-color="#ffb02e"/></linearGradient></defs>
<path d="M20.2 38 Q4.5 38 3.2 23 Q2.8 15 7.5 9.5 Q8.2 12.2 9.6 13 Q10.5 8.6 13.5 7.8 Q14 10.4 16 10.8 Q19 10 21.5 6.5 Q23.5 4.5 24.6 2.8 Q25.5 7 29 9 Q37.5 14 37.4 23 Q36.8 38 20.2 38 Z" fill="url(#ff)"/>
<circle cx="21.3" cy="20" r="8" fill="url(#fp)"/>
<path d="M8.5 20.5 Q10.5 13.5 18 12.8 Q23 12.5 25.5 15.5 Q21.5 14.5 18.5 16.5 Q16.2 18.5 17.5 21.5 Q12.5 20 8.5 20.5 Z" fill="url(#ft)"/>
</svg>
<div class="abs" style="left:430px;top:1281px;width:9px;height:5px;border-radius:3px;background:#9a9a9a"></div>

<svg class="abs" style="left:482px;top:1239px" width="36" height="36" viewBox="0 0 36 36">
<defs><radialGradient id="kp" cx="0.35" cy="0.3" r="0.8"><stop offset="0" stop-color="#eef3ff"/><stop offset="0.55" stop-color="#b0c4f2"/><stop offset="1" stop-color="#5f86dc"/></radialGradient></defs>
<circle cx="18" cy="17.6" r="16.9" fill="#050505"/>
<circle cx="18" cy="17.6" r="15.4" fill="#e9eefb"/>
<circle cx="18" cy="17.6" r="13.6" fill="url(#kp)"/>
<path d="M11.8 17 V12.4 Q11.8 6.4 18.2 6.4 Q24.6 6.4 24.6 12.4 V17" fill="none" stroke="#0b0b22" stroke-width="2.6"/>
<rect x="9" y="16.2" width="18.2" height="10.6" fill="#0b0b22"/>
<path d="M9.5 19.2 H26.7 M9.5 22 H26.7 M9.5 24.6 H26.7" stroke="#a3b7ea" stroke-width="0.9"/>
<rect x="17.3" y="17.4" width="1.6" height="7.6" fill="#a3b7ea"/>
</svg>
<div class="abs" style="left:496px;top:1281px;width:9px;height:5px;border-radius:3px;background:#9a9a9a"></div>

<svg class="abs" style="left:546px;top:1239px" width="40" height="36" viewBox="0 0 40 36">
<defs><linearGradient id="fy" x1="0" y1="0" x2="1" y2="1"><stop offset="0" stop-color="#ffe27a"/><stop offset="1" stop-color="#f9b81a"/></linearGradient></defs>
<path d="M2 3 Q2 1.5 3.5 1.5 H12 Q13.5 1.5 15 3 L17 5 H36.5 Q38 5 38 6.5 V33 Q38 34.5 36.5 34.5 H3.5 Q2 34.5 2 33 Z" fill="#e8a810"/>
<path d="M2 8 Q2 6.5 3.5 6.5 H36.5 Q38 6.5 38 8 V33 Q38 34.5 36.5 34.5 H3.5 Q2 34.5 2 33 Z" fill="url(#fy)"/>
<path d="M8.5 34.5 V26 Q8.5 23.5 11 23.5 H29 Q31.5 23.5 31.5 26 V34.5 Z" fill="#1a86d8"/>
<rect x="13" y="27" width="14" height="2" rx="1" fill="#0d5ea8"/>
</svg>
<div class="abs" style="left:562px;top:1281px;width:9px;height:5px;border-radius:3px;background:#9a9a9a"></div>

<svg class="abs" style="left:612px;top:1237px" width="44" height="40" viewBox="0 0 44 40">
<defs><linearGradient id="sg" x1="0" y1="0" x2="1" y2="1"><stop offset="0" stop-color="#f7f7f7"/><stop offset="1" stop-color="#dcdcdc"/></linearGradient></defs>
<rect x="2" y="1.8" width="27" height="27.5" rx="3.5" fill="url(#sg)"/>
<g fill="#b8482c"><rect x="5" y="5.3" width="4" height="3.6"/><rect x="11.1" y="5.3" width="4" height="3.6"/><rect x="17.2" y="5.3" width="3.6" height="3.6"/><rect x="5" y="11.4" width="4" height="3.6"/><rect x="5" y="17" width="4" height="3.6"/></g>
<path d="M22.8 10 L21.2 31" stroke="#8e8e8e" stroke-width="2.6" stroke-linecap="round"/>
<path d="M9.5 22.4 L32 21" stroke="#9c9c9c" stroke-width="2.6" stroke-linecap="round"/>
<circle cx="34" cy="20.6" r="3.4" fill="#0d2f4d" stroke="#3b9be0" stroke-width="2.4"/>
<circle cx="20.8" cy="33.8" r="3.4" fill="#0d2f4d" stroke="#3b9be0" stroke-width="2.4"/>
</svg>
<div class="abs" style="left:628px;top:1281px;width:9px;height:5px;border-radius:3px;background:#9a9a9a"></div>

<div class="txt" style="left:113.70px;top:182.64px;font-size:21.6px;font-weight:400;color:#f7f7f7;transform:scaleX(1.0047);transform-origin:0 0">regedit</div>
<div class="txt" style="left:141.57px;top:261.61px;font-size:21.4px;font-weight:400;color:#1e0b22;transform:scaleX(0.9983);transform-origin:0 0">Tout</div>
<div class="txt" style="left:224.60px;top:261.71px;font-size:21.4px;font-weight:400;color:#f2f2f2;transform:scaleX(1.0083);transform-origin:0 0">Applications</div>
<div class="txt" style="left:381.69px;top:261.81px;font-size:21.4px;font-weight:400;color:#f2f2f2;transform:scaleX(0.9974);transform-origin:0 0">Documents</div>
<div class="txt" style="left:532.30px;top:261.81px;font-size:21.4px;font-weight:400;color:#f2f2f2;transform:scaleX(0.9594);transform-origin:0 0">Web</div>
<div class="txt" style="left:615.36px;top:261.81px;font-size:21.4px;font-weight:400;color:#f2f2f2;transform:scaleX(0.9589);transform-origin:0 0">Paramètres</div>
<div class="abs" style="left:0;top:0;width:797px;height:1293px;overflow:hidden"><div class="txt" style="left:762.01px;top:261.81px;font-size:21.4px;font-weight:400;color:#f2f2f2;transform:scaleX(0.9878);transform-origin:0 0">Personnalisé</div></div>
<div class="txt" style="left:71.83px;top:336.54px;font-size:20.9px;font-weight:400;-webkit-text-stroke:0.7px #f7f7f7;color:#f7f7f7;transform:scaleX(1.0577);transform-origin:0 0">Meilleur résultat</div>
<div class="txt" style="left:123.05px;top:400.96px;font-size:20.4px;font-weight:400;color:#f7f7f7;transform:scaleX(1.0113);transform-origin:0 0">Éditeur du Registre</div>
<div class="txt" style="left:124.00px;top:431.92px;font-size:18.1px;font-weight:400;color:#cdcdcd;transform:scaleX(1.0419);transform-origin:0 0">Application</div>
<div class="txt" style="left:73.53px;top:497.96px;font-size:20.4px;font-weight:400;-webkit-text-stroke:0.7px #f7f7f7;color:#f7f7f7;transform:scaleX(1.0215);transform-origin:0 0">Rechercher sur le Web</div>
<div class="txt" style="left:123.30px;top:557.62px;font-size:21.5px;font-weight:400;color:#f7f7f7;transform:scaleX(1.0063);transform-origin:0 0">regedit</div>
<div class="txt" style="left:194.57px;top:561.36px;font-size:17.7px;font-weight:400;color:#cdcdcd;transform:scaleX(1.0325);transform-origin:0 0">- Afficher les résultats Web</div>
<div class="txt" style="left:739.49px;top:492.41px;font-size:25.4px;font-weight:400;color:#f7f7f7;transform:scaleX(1.0407);transform-origin:0 0">Éditeur du Registre</div>
<div class="txt" style="left:807.10px;top:531.17px;font-size:18.5px;font-weight:400;color:#cdcdcd;transform:scaleX(1.0205);transform-origin:0 0">Application</div>
<div class="txt" style="left:647.15px;top:631.53px;font-size:18.2px;font-weight:400;color:#e6e6e6;transform:scaleX(1.0293);transform-origin:0 0">Ouvrir</div>
<div class="txt" style="left:647.43px;top:679.53px;font-size:18.2px;font-weight:400;color:#e6e6e6;transform:scaleX(1.0105);transform-origin:0 0">Exécuter en tant qu’administrateur</div>
<div class="txt" style="left:647.46px;top:727.53px;font-size:18.2px;font-weight:400;color:#e6e6e6;transform:scaleX(1.0209);transform-origin:0 0">Ouvrir l’emplacement du fichier</div>
<div class="txt" style="left:647.45px;top:775.53px;font-size:18.2px;font-weight:400;color:#e6e6e6;transform:scaleX(0.9992);transform-origin:0 0">Épingler au menu Démarrer</div>
<div class="txt" style="left:647.47px;top:823.53px;font-size:18.2px;font-weight:400;color:#e6e6e6;transform:scaleX(0.9846);transform-origin:0 0">Épingler à la barre des tâches</div>
<div class="txt" style="left:148.41px;top:1249.60px;font-size:17.3px;font-weight:400;-webkit-text-stroke:0.35px #e9fbff;color:#e9fbff;transform:scaleX(1.0067);transform-origin:0 0">Recherche</div>
<div class="txt" style="left:368.82px;top:1235.21px;font-size:17.4px;font-weight:400;color:#f7f7f7;transform:scaleX(0.8856);transform-origin:0 0">13°</div>
</body></html>
